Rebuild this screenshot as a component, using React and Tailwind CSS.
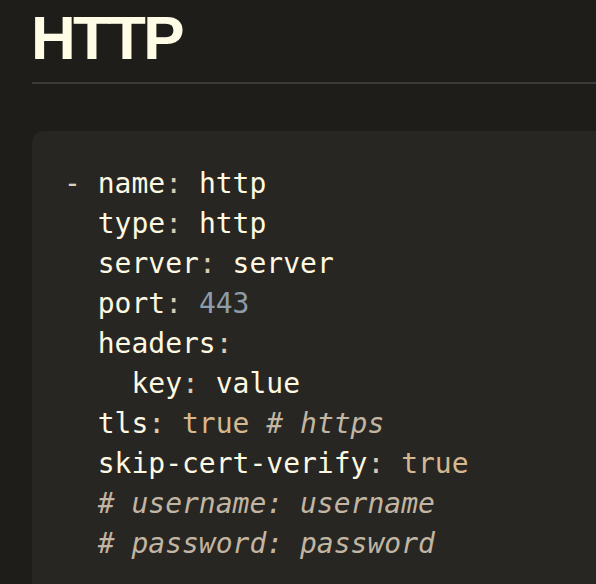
import React from 'react';

// YAML sample for the HTTP proxy entry
const K = ({ children }) => <span className="text-[#fdf8e1]">{children}</span>;
const C = () => <span className="text-[#d9ccb2]">:</span>;
const B = ({ children }) => <span className="text-[#d6b88f]">{children}</span>;
const N = ({ children }) => <span className="text-[#8d9ca8]">{children}</span>;
const Cm = ({ children }) => <span className="text-[#c2b5a3] italic">{children}</span>;

export default function App() {
  return (
    <div className="w-[596px] h-[584px] overflow-hidden bg-[#1e1d19] pl-[32px]">
      <h1 className="mt-[7px] mb-[3px] text-[62px] leading-none font-bold tracking-[-0.045em] text-[#fffde6] -ml-[1px] font-['Liberation_Sans',Arial,sans-serif]">
        HTTP
      </h1>
      <div className="mt-[13px] h-[2px] w-[700px] bg-[#3a3a38]"></div>
      <div className="mt-[47px] w-[700px] rounded-[12px] bg-[#272622] pl-[32px] pt-[33px] pb-[40px]">
        <pre className="font-['DejaVu_Sans_Mono',Menlo,monospace] text-[28px] leading-[40px] text-[#fdf8e1]">
          <div><span className="text-[#d9d0c0]">-</span> <K>name</K><C /> <K>http</K></div>
          <div>  <K>type</K><C /> <K>http</K></div>
          <div>  <K>server</K><C /> <K>server</K></div>
          <div>  <K>port</K><C /> <N>443</N></div>
          <div>  <K>headers</K><C /></div>
          <div>    <K>key</K><C /> <K>value</K></div>
          <div>  <K>tls</K><C /> <B>true</B> <Cm># https</Cm></div>
          <div>  <K>skip-cert-verify</K><C /> <B>true</B></div>
          <div>  <Cm># username: username</Cm></div>
          <div>  <Cm># password: password</Cm></div>
        </pre>
      </div>
    </div>
  );
}
